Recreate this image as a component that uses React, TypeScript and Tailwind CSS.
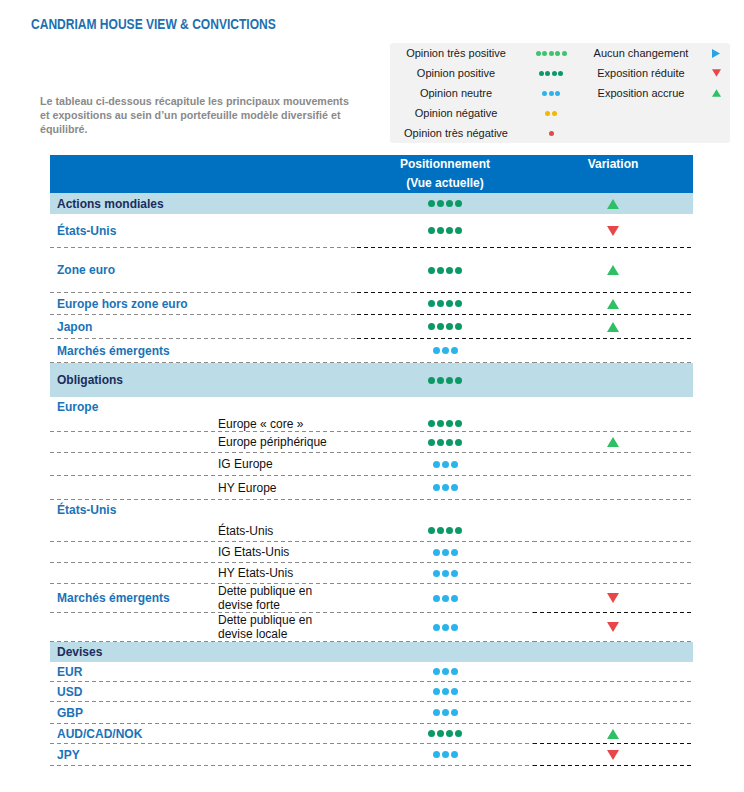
import React from 'react';

type Dots = 'pos' | 'neu';
type Tri = 'up' | 'down';

interface TableRow {
  kind: 'band' | 'row';
  label?: string;
  sub?: string[];
  dots?: Dots;
  tri?: Tri;
  h: number;
  line?: string; // one letter per column: g = gray dashes, b = black dashes
}

const ROWS: TableRow[] = [
  { kind: 'band', label: 'Actions mondiales', dots: 'pos', tri: 'up', h: 21 },
  { kind: 'row', label: 'États-Unis', dots: 'pos', tri: 'down', h: 33, line: 'ggbb' },
  { kind: 'row', label: 'Zone euro', dots: 'pos', tri: 'up', h: 44, line: 'ggbb' },
  { kind: 'row', label: 'Europe hors zone euro', dots: 'pos', tri: 'up', h: 21, line: 'ggbb' },
  { kind: 'row', label: 'Japon', dots: 'pos', tri: 'up', h: 23, line: 'ggbb' },
  { kind: 'row', label: 'Marchés émergents', dots: 'neu', h: 23, line: 'gggg' },
  { kind: 'band', label: 'Obligations', dots: 'pos', h: 34 },
  { kind: 'row', label: 'Europe', h: 19 },
  { kind: 'row', sub: ['Europe « core »'], dots: 'pos', h: 15, line: 'gggg' },
  { kind: 'row', sub: ['Europe périphérique'], dots: 'pos', tri: 'up', h: 20, line: 'gggg' },
  { kind: 'row', sub: ['IG Europe'], dots: 'neu', h: 22, line: 'gggg' },
  { kind: 'row', sub: ['HY Europe'], dots: 'neu', h: 23, line: 'gggg' },
  { kind: 'row', label: 'États-Unis', h: 20 },
  { kind: 'row', sub: ['États-Unis'], dots: 'pos', h: 21, line: 'gggg' },
  { kind: 'row', sub: ['IG Etats-Unis'], dots: 'neu', h: 20, line: 'gggg' },
  { kind: 'row', sub: ['HY Etats-Unis'], dots: 'neu', h: 20, line: 'gggg' },
  {
    kind: 'row',
    label: 'Marchés émergents',
    sub: ['Dette publique en', 'devise forte'],
    dots: 'neu',
    tri: 'down',
    h: 28,
    line: 'gggb',
  },
  { kind: 'row', sub: ['Dette publique en', 'devise locale'], dots: 'neu', tri: 'down', h: 28, line: 'gggg' },
  { kind: 'band', label: 'Devises', h: 20 },
  { kind: 'row', label: 'EUR', dots: 'neu', h: 19, line: 'gggg' },
  { kind: 'row', label: 'USD', dots: 'neu', h: 19, line: 'gggg' },
  { kind: 'row', label: 'GBP', dots: 'neu', h: 21, line: 'gggg' },
  { kind: 'row', label: 'AUD/CAD/NOK', dots: 'pos', tri: 'up', h: 19, line: 'gggb' },
  { kind: 'row', label: 'JPY', dots: 'neu', tri: 'down', h: 21, line: 'gggb' },
];

const COLS = 'grid grid-cols-[161px_146px_176px_160px]';

const GRAY_DASH = 'h-px bg-[repeating-linear-gradient(90deg,#8a8a8a_0_4px,transparent_4px_7px)]';
const BLACK_DASH = 'h-px bg-[repeating-linear-gradient(90deg,#111111_0_4px,transparent_4px_7px)]';

function DotGroup({ count, color, size }: { count: number; color: string; size: 'sm' | 'md' }) {
  return (
    <div className={size === 'md' ? 'flex gap-[2px]' : 'flex gap-[1.5px]'}>
      {Array.from({ length: count }).map((_, i) => (
        <span
          key={i}
          className={`${size === 'md' ? 'h-[7px] w-[7px]' : 'h-[5px] w-[5px]'} rounded-full ${color}`}
        />
      ))}
    </div>
  );
}

function Triangle({ dir, size }: { dir: 'up' | 'down' | 'right'; size: 'sm' | 'md' }) {
  const w = size === 'md' ? 12 : 9;
  const h = size === 'md' ? 10 : 8;
  if (dir === 'up') {
    return (
      <svg width={w} height={h} viewBox="0 0 12 10">
        <polygon points="6,0 12,10 0,10" fill="#2fbf64" />
      </svg>
    );
  }
  if (dir === 'down') {
    return (
      <svg width={w} height={h} viewBox="0 0 12 10">
        <polygon points="0,0 12,0 6,10" fill="#e8474a" />
      </svg>
    );
  }
  return (
    <svg width={8} height={9} viewBox="0 0 8 9">
      <polygon points="0,0 8,4.5 0,9" fill="#27a3e6" />
    </svg>
  );
}

function PositionDots({ dots }: { dots?: Dots }) {
  if (dots === 'pos') return <DotGroup count={4} color="bg-[#0b9966]" size="md" />;
  if (dots === 'neu') return <DotGroup count={3} color="bg-[#2bb4ec]" size="md" />;
  return null;
}

function DashLine({ pattern }: { pattern: string }) {
  return (
    <div className={COLS}>
      {pattern.split('').map((c, i) => (
        <div key={i} className={c === 'b' ? BLACK_DASH : GRAY_DASH} />
      ))}
    </div>
  );
}

function Row({ row }: { row: TableRow }) {
  const band = row.kind === 'band';
  return (
    <>
      <div className={`${COLS} ${band ? 'bg-[#bcdde7]' : ''}`} style={{ height: row.h }}>
        <div
          className={`flex items-center pl-[7px] text-[12px] font-bold ${
            band ? 'text-[#1b2d5c]' : 'text-[#1a73b8]'
          }`}
        >
          {row.label}
        </div>
        <div className="flex flex-col justify-center pl-[7px] text-[12px] leading-[14px] text-[#111]">
          {row.sub?.map((s) => (
            <span key={s}>{s}</span>
          ))}
        </div>
        <div className="flex items-center justify-center">
          <PositionDots dots={row.dots} />
        </div>
        <div className="flex items-center justify-center">
          {row.tri ? <Triangle dir={row.tri} size="md" /> : null}
        </div>
      </div>
      {row.line ? <DashLine pattern={row.line} /> : null}
    </>
  );
}

function Legend() {
  const left: [string, React.ReactNode][] = [
    ['Opinion très positive', <DotGroup count={5} color="bg-[#3dc46e]" size="sm" />],
    ['Opinion positive', <DotGroup count={4} color="bg-[#0b9966]" size="sm" />],
    ['Opinion neutre', <DotGroup count={3} color="bg-[#2bb4ec]" size="sm" />],
    ['Opinion négative', <DotGroup count={2} color="bg-[#f4b800]" size="sm" />],
    ['Opinion très négative', <DotGroup count={1} color="bg-[#e8474a]" size="sm" />],
  ];
  const right: [string, React.ReactNode][] = [
    ['Aucun changement', <Triangle dir="right" size="sm" />],
    ['Exposition réduite', <Triangle dir="down" size="sm" />],
    ['Exposition accrue', <Triangle dir="up" size="sm" />],
  ];

  return (
    <div className="grid w-[340px] grid-cols-[132px_58px_122px_28px] rounded-[3px] bg-[#f2f2f2] text-[11px] text-[#1a1a1a]">
      {left.map(([label, icon], i) => (
        <React.Fragment key={label}>
          <div className="flex h-5 items-center justify-center">{label}</div>
          <div className="flex h-5 items-center justify-center">{icon}</div>
          <div className="flex h-5 items-center justify-center">{right[i]?.[0]}</div>
          <div className="flex h-5 items-center justify-center">{right[i]?.[1]}</div>
        </React.Fragment>
      ))}
    </div>
  );
}

export default function App() {
  return (
    <div className="min-h-[792px] w-[744px] bg-white font-['Liberation_Sans',Arial,sans-serif]">
      <div className="h-[43px] pt-[16px] pl-[31px]">
        <h1 className="w-max origin-left scale-x-[0.83] text-[14.5px] leading-[16px] font-bold text-[#1c6fb1]">
          CANDRIAM HOUSE VIEW &amp; CONVICTIONS
        </h1>
      </div>

      <div className="flex">
        <p className="mt-[51px] ml-[40px] w-[316px] text-[10.7px] leading-[14px] font-bold text-[#8a8a8a]">
          Le tableau ci-dessous récapitule les principaux mouvements et expositions au sein d’un
          portefeuille modèle diversifié et équilibré.
        </p>
        <div className="ml-[34px]">
          <Legend />
        </div>
      </div>

      <div className="mt-[12px] ml-[50px] w-[643px]">
        <div className={`${COLS} h-[38px] bg-[#0070c0] text-[12px] leading-[19px] font-bold text-white`}>
          <div />
          <div />
          <div className="text-center">
            Positionnement
            <br />
            (Vue actuelle)
          </div>
          <div className="text-center">Variation</div>
        </div>
        {ROWS.map((row, i) => (
          <Row key={i} row={row} />
        ))}
      </div>
    </div>
  );
}
